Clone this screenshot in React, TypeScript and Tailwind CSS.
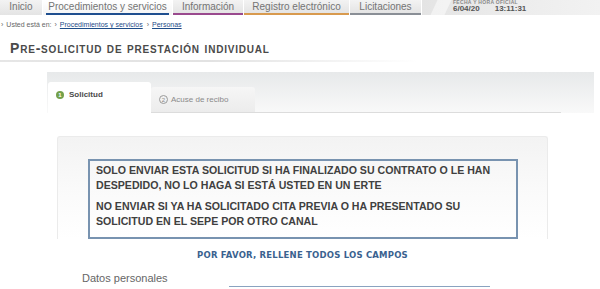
import React from 'react'

const navTabs = [
  { label: 'Inicio', w: 'w-[42px]', line: '' },
  { label: 'Procedimientos y servicios', w: 'w-[129px]', line: '', active: true },
  { label: 'Información', w: 'w-[70px]', line: 'border-[#9a4a8e]' },
  { label: 'Registro electrónico', w: 'w-[105px]', line: 'border-[#d89a4e]' },
  { label: 'Licitaciones', w: 'w-[71px]', line: 'border-[#8a8f96]' },
]

function TopNav() {
  return (
    <div className="flex h-[15px] bg-white">
      {navTabs.map((t) => (
        <div
          key={t.label}
          className={`${t.w} mr-px flex items-start justify-center ${t.line ? `border-b-2 ${t.line}` : ''} ${
            t.active ? 'bg-gradient-to-b from-white to-[#f5f5f5]' : 'bg-gradient-to-b from-[#f3f3f3] to-[#e4e4e4]'
          }`}
        >
          <span
            className={`text-[10px] leading-[13px] text-[#747474] ${t.active ? 'border-b-2 border-[#1f4f8f] px-[2px]' : ''}`}
          >
            {t.label}
          </span>
        </div>
      ))}
      <div className="relative flex-1 bg-gradient-to-r from-[#e4e4e4] via-[#ececec] to-[#f2f2f2] pl-[31px]">
        <div className="absolute left-[12px] top-0 h-[15px] w-[14px] -skew-x-[25deg] bg-white/50" />
        <div className="-mt-px text-[5px] font-bold leading-[7px] tracking-[0.3px] text-[#8a8a8a]">FECHA Y HORA OFICIAL</div>
        <div className="-mt-px flex gap-[15px] text-[8px] font-bold leading-[8px] text-[#555]">
          <span>6/04/20</span>
          <span>13:11:31</span>
        </div>
      </div>
    </div>
  )
}

function Breadcrumb() {
  return (
    <div className="mt-[5px] flex items-center gap-[3px] pl-px text-[7px] leading-[9px] text-[#666]">
      <span>›</span>
      <span>Usted está en:</span>
      <span>›</span>
      <span className="text-[#1e4c88] underline">Procedimientos y servicios</span>
      <span className="ml-[1px]">›</span>
      <span className="text-[#1e4c88] underline">Personas</span>
    </div>
  )
}

export default function App() {
  return (
    <div className="h-[289px] w-[600px] overflow-hidden bg-white font-['Liberation_Sans',Arial,sans-serif]">
      <TopNav />
      <Breadcrumb />

      <div className="mt-[12px] pl-[10px]">
        <h1 className="text-[14px] font-bold leading-[14px] tracking-[0.8px] text-[#4a4a4a] [font-variant:small-caps]">
          Pre-solicitud de prestación individual
        </h1>
      </div>
      <div className="mt-[5px] h-[2px] w-[418px] bg-gradient-to-r from-[#e6e6e6] via-[#e2e2e2] to-transparent" />

      <div className="ml-[47px] mr-[6px] mt-[10px] h-[41px] bg-gradient-to-b from-[#e7e9ea] to-[#f9f9f9] pl-px">
        <div className="flex h-full items-end">
          <div className="flex h-[31px] w-[103px] items-start gap-[5px] rounded-t-[3px] bg-white pl-[8px] pt-[9px]">
            <span className="flex h-[8px] w-[8px] items-center justify-center rounded-full bg-[#74a04a] text-[6px] font-bold leading-none text-white">1</span>
            <span className="text-[8px] font-bold leading-[8px] text-[#4a4a4a]">Solicitud</span>
          </div>
          <div className="flex h-[26px] w-[104px] items-start gap-[3px] rounded-t-[3px] border-b border-[#dcdcdc] bg-gradient-to-b from-[#f6f6f6] to-[#ececec] pl-[8px] pt-[8px]">
            <span className="flex h-[9px] w-[9px] items-center justify-center rounded-full border border-[#9a9a9a] text-[6px] leading-none text-[#8a8a8a]">2</span>
            <span className="text-[8px] leading-[9px] text-[#8a8a8a]">Acuse de recibo</span>
          </div>
          <div className="h-px w-[306px] bg-[#dcdcdc]" />
        </div>
      </div>

      <div className="ml-[57px] mt-[23px] w-[491px]">
        <div className="rounded-t-[3px] border-x border-t border-[#ebebeb] bg-gradient-to-b from-[#f3f3f3] via-[#fafafa] to-white pt-[22px]">
          <div className="ml-[30px] w-[430px] border-2 border-[#7893b0] px-[6px] pb-[8px] pt-[2px] text-[10.6px] font-bold leading-[15px] text-[#404040]">
            <p>SOLO ENVIAR ESTA SOLICITUD SI HA FINALIZADO SU CONTRATO O LE HAN DESPEDIDO, NO LO HAGA SI ESTÁ USTED EN UN ERTE</p>
            <p className="mt-[6px]">NO ENVIAR SI YA HA SOLICITADO CITA PREVIA O HA PRESENTADO SU SOLICITUD EN EL SEPE POR OTRO CANAL</p>
          </div>
        </div>
        <div className="mt-[11px] text-center font-['DejaVu_Sans',Verdana,sans-serif] text-[8.5px] font-bold leading-[10px] tracking-[0.2px] text-[#3a628f]">
          POR FAVOR, RELLENE TODOS LOS CAMPOS
        </div>
        <div className="mt-[12px] flex items-end">
          <span className="ml-[25px] text-[11px] leading-[12px] text-[#666]">Datos personales</span>
          <div className="mb-[-3px] ml-[61px] h-px w-[261px] bg-[#8aa3c0]" />
        </div>
      </div>
    </div>
  )
}
